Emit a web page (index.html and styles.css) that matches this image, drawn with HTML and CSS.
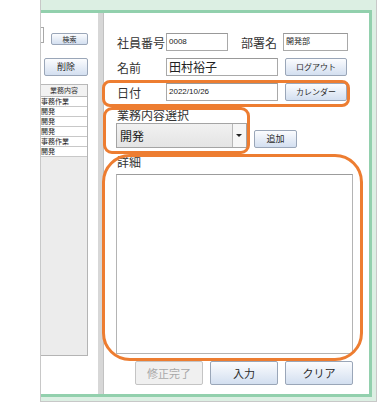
FILE: index.html
```html
<!DOCTYPE html>
<html lang="ja">
<head>
    <meta charset="UTF-8">
    <meta name="viewport" content="width=device-width, initial-scale=1.0">
    <title>業務日報入力</title>
    <link rel="stylesheet" href="styles.css">
</head>
<body>
    <div class="screen">
        <div class="window">
            <div class="frame">
                <!-- left list pane (scrolled, only partly visible) -->
                <div class="side">
                    <div class="side-search">
                        <span class="side-field"></span>
                        <button class="btn btn-tiny">検索</button>
                    </div>
                    <button class="btn btn-small side-delete">削除</button>
                    <div class="side-list">
                        <div class="side-head">業務内容</div>
                        <div class="side-row">事務作業</div>
                        <div class="side-row">開発</div>
                        <div class="side-row">開発</div>
                        <div class="side-row">開発</div>
                        <div class="side-row">事務作業</div>
                        <div class="side-row">開発</div>
                    </div>
                </div>

                <div class="splitter"></div>

                <!-- input form -->
                <div class="main">
                    <div class="row">
                        <span class="label">社員番号</span>
                        <div class="field field-id">0008</div>
                        <span class="label label-dept">部署名</span>
                        <div class="field field-dept">開発部</div>
                    </div>
                    <div class="row">
                        <span class="label">名前</span>
                        <div class="field field-wide field-big">田村裕子</div>
                        <button class="btn btn-small btn-side">ログアウト</button>
                    </div>
                    <div class="row">
                        <span class="label">日付</span>
                        <div class="field field-wide">2022/10/26</div>
                        <button class="btn btn-small btn-side">カレンダー</button>
                    </div>

                    <div class="block-label">業務内容選択</div>
                    <div class="pick">
                        <div class="combo">
                            <span class="combo-text">開発</span>
                            <span class="combo-arrow"></span>
                        </div>
                        <button class="btn btn-small btn-add">追加</button>
                    </div>

                    <div class="block-label">詳細</div>
                    <div class="memo"></div>

                    <div class="actions">
                        <button class="btn btn-big" disabled>修正完了</button>
                        <button class="btn btn-big">入力</button>
                        <button class="btn btn-big">クリア</button>
                    </div>
                </div>
            </div>
        </div>

        <!-- orange annotation marks -->
        <div class="mark mark-date"></div>
        <div class="mark mark-pick"></div>
        <div class="mark mark-detail"></div>
    </div>
</body>
</html>
```

FILE: styles.css
```css
body {
    margin: 0;
    background-color: #fff;
    font-family: "Noto Sans CJK JP", sans-serif;
    color: #333;
}

.screen {
    position: relative;
    width: 387px;
    height: 408px;
}

.window {
    box-sizing: border-box;
    margin-left: 40px;
    width: 337px;
    height: 402px;
    padding: 10px 4px 4px 0;
    background-color: #dcefe3;
    border: 1px solid #c8c8c8;
    border-top: none;
}

.frame {
    display: flex;
    box-sizing: border-box;
    height: 100%;
    background-color: #fff;
    border: 3px solid #92d0ad;
    border-left: none;
}

/* left pane */
.side {
    width: 57px;
    flex-shrink: 0;
}

.side-search {
    display: flex;
    align-items: flex-start;
    margin-top: 14px;
}

.side-field {
    width: 2px;
    height: 14px;
    border: 1px solid #a8a8a8;
    border-left: none;
    background-color: #fff;
}

.btn {
    box-sizing: border-box;
    padding: 0;
    font-family: "Noto Sans CJK JP", sans-serif;
    color: #2a2a2a;
    background: linear-gradient(#fbfcfe, #d3dff0);
    border: 1px solid #9aa6b8;
    border-radius: 2px;
    cursor: pointer;
}

.btn:disabled {
    color: #a8a8a8;
    background: #f0f0f0;
    border-color: #c4c4c4;
}

.btn-tiny {
    margin: 6px 0 0 7px;
    width: 37px;
    height: 12px;
    font-size: 7px;
    line-height: 10px;
}

.btn-small {
    height: 18px;
    font-size: 8px;
    line-height: 16px;
}

.side-delete {
    display: block;
    margin: 13px 0 0 3px;
    width: 44px;
    font-size: 9px;
}

.side-list {
    box-sizing: border-box;
    margin-top: 8px;
    width: 47px;
    height: 272px;
    background-color: #ececec;
    border-right: 1px solid #b4b4b4;
    border-bottom: 1px solid #b4b4b4;
}

.side-head {
    height: 11px;
    font-size: 7px;
    line-height: 11px;
    text-align: center;
    background-color: #f2f2f2;
    border: 1px solid #b9b9b9;
    border-left: none;
    border-right: none;
}

.side-row {
    height: 9px;
    font-size: 7px;
    line-height: 9px;
    color: #222;
    background-color: #fff;
    border-bottom: 1px solid #c8c8c8;
    overflow: hidden;
}

.splitter {
    width: 5px;
    flex-shrink: 0;
    background-color: #e6e6e6;
    background-image: radial-gradient(#c4c4c4 0.6px, transparent 0.8px);
    background-size: 2px 2px;
}

/* right pane */
.main {
    flex: 1;
    padding: 20px 16px 0 13px;
    border-left: 1px solid #c2c2c2;
}

.row {
    display: flex;
    align-items: center;
    height: 18px;
    margin-bottom: 7px;
}

.label {
    width: 49px;
    flex-shrink: 0;
    font-size: 12px;
    white-space: nowrap;
}

.label-dept {
    width: auto;
    margin: 0 6px 0 13px;
}

.field {
    box-sizing: border-box;
    height: 18px;
    padding-left: 2px;
    font-family: "Liberation Sans", "Noto Sans CJK JP", sans-serif;
    font-size: 8px;
    line-height: 16px;
    color: #222;
    border: 1px solid #a9a9a9;
    border-top-color: #999;
}

.field-id {
    width: 62px;
}

.field-dept {
    width: 65px;
}

.field-wide {
    width: 112px;
}

.field-big {
    font-family: "Noto Sans CJK JP", sans-serif;
    font-size: 12px;
}

.btn-side {
    margin-left: 7px;
    width: 62px;
}

.block-label {
    margin-top: 3px;
    font-size: 12px;
    line-height: 14px;
}

.pick {
    display: flex;
    align-items: flex-end;
    margin: 1px 0 0 -1px;
}

.combo {
    box-sizing: border-box;
    display: flex;
    width: 131px;
    height: 25px;
    background: linear-gradient(#f1f1f1, #e4e4e4);
    border: 1px solid #a4a4a4;
}

.combo-text {
    flex: 1;
    padding-left: 3px;
    font-size: 12px;
    line-height: 23px;
    color: #222;
}

.combo-arrow {
    position: relative;
    width: 13px;
    background-color: #f6f6f6;
    border-left: 1px solid #b8b8b8;
}

.combo-arrow::after {
    content: "";
    position: absolute;
    left: 3px;
    top: 10px;
    border-left: 3px solid transparent;
    border-right: 3px solid transparent;
    border-top: 3px solid #222;
}

.btn-add {
    margin-left: 7px;
    width: 43px;
    font-size: 9px;
}

.block-label + .memo {
    margin-top: 5px;
}

.pick + .block-label {
    margin-top: 7px;
}

.memo {
    box-sizing: border-box;
    margin-left: -1px;
    width: 237px;
    height: 180px;
    background-color: #fff;
    border: 1px solid #b4b4b4;
    border-top-color: #9c9c9c;
}

.actions {
    display: flex;
    justify-content: flex-end;
    gap: 7px;
    margin-top: 7px;
}

.btn-big {
    width: 68px;
    height: 24px;
    font-size: 11px;
}

/* orange annotation marks */
.mark {
    position: absolute;
    box-sizing: border-box;
    border: 3px solid #ed7d31;
}

.mark-date {
    left: 102px;
    top: 80px;
    width: 248px;
    height: 27px;
    border-radius: 8px;
}

.mark-pick {
    left: 103px;
    top: 107px;
    width: 147px;
    height: 47px;
    border-radius: 9px;
}

.mark-detail {
    left: 102px;
    top: 154px;
    width: 261px;
    height: 207px;
    border-radius: 28px;
}
```
